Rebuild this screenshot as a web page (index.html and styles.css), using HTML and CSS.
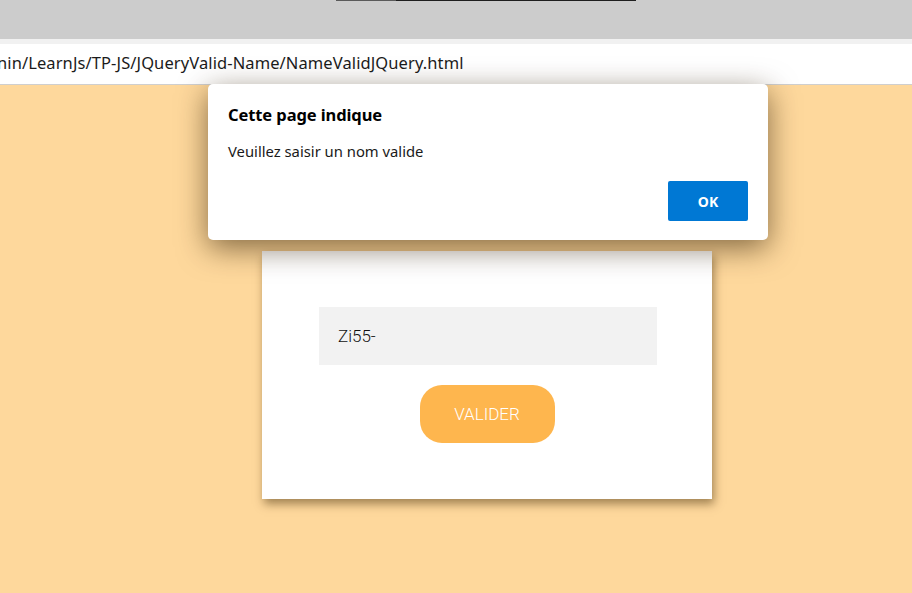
FILE: index.html
```html
<!DOCTYPE html>
<html lang="fr">
<head>
<meta charset="utf-8">
<title>NameValidJQuery</title>
<link rel="stylesheet" href="styles.css">
</head>
<body>
<div class="chrome-top">
  <div class="tab-line"><span class="seg-a"></span><span class="seg-b"></span></div>
</div>
<div class="chrome-strip"></div>
<div class="address">
  <span class="url">nin/LearnJs/TP-JS/JQueryValid-Name/NameValidJQuery.html</span>
</div>
<main class="page">
  <form class="card">
    <div class="field">Zi55-</div>
    <button type="button" class="valider">VALIDER</button>
  </form>
  <div class="dialog">
    <div class="dlg-title">Cette page indique</div>
    <div class="dlg-msg">Veuillez saisir un nom valide</div>
    <div class="dlg-actions"><button type="button" class="ok">OK</button></div>
  </div>
</main>
</body>
</html>
```
FILE: styles.css
```css
* { box-sizing: border-box; }
html, body { margin: 0; padding: 0; height: 100%; }
body {
  font-family: "Noto Sans", "Open Sans", sans-serif;
  background: #fed89c;
  overflow: hidden;
}
.chrome-top {
  height: 39px;
  background: #cccccc;
}
.tab-line {
  display: flex;
  padding-left: 336px;
  height: 1px;
}
.seg-a { width: 60px; height: 1px; background: #5a5a5a; }
.seg-b { width: 240px; height: 1px; background: #1e1e1e; }
.chrome-strip {
  height: 5px;
  background: #f1f1f1;
}
.address {
  height: 41px;
  background: #ffffff;
  border-bottom: 1px solid #cfcfcf;
  display: flex;
  align-items: center;
  overflow: hidden;
  white-space: nowrap;
}
.url {
  font-family: "Noto Sans", sans-serif;
  font-size: 16.5px;
  color: #1b1b1b;
  margin-left: -3px;
  letter-spacing: 0.1px;
  padding-bottom: 3px;
}
.page {
  position: relative;
  height: calc(100% - 85px);
  padding-top: 166px;
  padding-left: 262px;
}
.card {
  width: 450px;
  height: 248px;
  background: #ffffff;
  box-shadow: 2px 5px 9px rgba(70, 45, 10, 0.5);
  display: flex;
  flex-direction: column;
  align-items: center;
  padding-top: 56px;
  margin: 0;
}
.field {
  width: 338px;
  height: 58px;
  background: #f2f2f2;
  font-family: Roboto, sans-serif;
  font-weight: 300;
  font-size: 17px;
  color: #111;
  display: flex;
  align-items: center;
  padding-left: 19px;
  margin-left: 2px;
}
.valider {
  margin-top: 20px;
  width: 135px;
  height: 58px;
  border: none;
  border-radius: 22px;
  background: #feb64e;
  color: #ffffff;
  font-family: Roboto, sans-serif;
  font-weight: 300;
  font-size: 17px;
  padding: 0;
}
.dialog {
  position: absolute;
  top: -1px;
  left: 208px;
  width: 560px;
  height: 156px;
  background: #ffffff;
  border-radius: 5px;
  box-shadow: 0 8px 30px rgba(50, 30, 5, 0.6);
  padding: 20px 20px 0 20px;
  display: flex;
  flex-direction: column;
}
.dlg-title {
  font-weight: 700;
  font-size: 16.5px;
  color: #000;
  letter-spacing: -0.1px;
  line-height: 22px;
}
.dlg-msg {
  margin-top: 15px;
  font-size: 14.8px;
  color: #1a1a1a;
  line-height: 20px;
  letter-spacing: 0;
}
.dlg-actions {
  display: flex;
  justify-content: flex-end;
  margin-top: 20px;
}
.ok {
  width: 80px;
  height: 40px;
  border: none;
  border-radius: 2px;
  background: #0078d4;
  color: #ffffff;
  font-family: "Noto Sans", sans-serif;
  font-weight: 700;
  font-size: 14px;
  padding: 0;
}
```
